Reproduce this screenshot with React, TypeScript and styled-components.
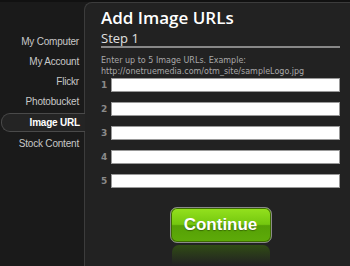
import styled, { createGlobalStyle } from 'styled-components'

const GlobalStyle = createGlobalStyle`
  html, body {
    margin: 0;
    padding: 0;
    background: #181818;
    width: 350px;
    height: 266px;
    overflow: hidden;
  }
  body {
    font-family: "DejaVu Sans", "Liberation Sans", sans-serif;
  }
`

const sources = ['My Computer', 'My Account', 'Flickr', 'Photobucket', 'Image URL', 'Stock Content']

export default function App() {
  return (
    <>
      <GlobalStyle />
      <Layout>
        <Sidebar>
          {sources.map(name => (
            <NavItem key={name} $active={name === 'Image URL'}>{name}</NavItem>
          ))}
        </Sidebar>
        <Panel>
          <Title>Add Image URLs</Title>
          <StepHeading>Step 1</StepHeading>
          <Hint>
            Enter up to 5 Image URLs. Example:<br />
            http://onetruemedia.com/otm_site/sampleLogo.jpg
          </Hint>
          <Fields>
            {[1, 2, 3, 4, 5].map(n => (
              <FieldRow key={n}>
                <FieldNumber>{n}</FieldNumber>
                <UrlInput type="text" />
              </FieldRow>
            ))}
          </Fields>
          <ButtonArea>
            <ContinueButton>Continue</ContinueButton>
            <Reflection />
          </ButtonArea>
        </Panel>
      </Layout>
    </>
  )
}

const Layout = styled.div`
  display: flex;
  width: 350px;
  height: 266px;
  background: linear-gradient(#111 0, #111 2px, #1a1a1a 2px);
`

const Sidebar = styled.nav`
  width: 84px;
  flex-shrink: 0;
  padding-top: 32px;
  display: flex;
  flex-direction: column;
  position: relative;
  z-index: 1;
`

const NavItem = styled.div<{ $active?: boolean }>`
  height: 20px;
  line-height: 20px;
  text-align: right;
  font-family: "Liberation Sans", Arial, sans-serif;
  font-size: 10px;
  letter-spacing: -0.2px;
  padding-right: 5px;
  color: ${p => (p.$active ? '#fff' : '#c8c8c8')};
  font-weight: ${p => (p.$active ? 'bold' : 'normal')};
  ${p =>
    p.$active &&
    `
    height: 17px;
    line-height: 17px;
    margin: 1px -1px 2px 1px;
    background: #242424;
    border: 1px solid #4a4a4a;
    border-right: none;
    border-radius: 9px 0 0 9px;
  `}
`

const Panel = styled.main`
  flex: 1;
  margin-top: 2px;
  background: #222;
  border-top: 1px solid #3c3c3c;
  border-left: 1px solid #3c3c3c;
  border-top-left-radius: 8px;
  padding: 4px 10px 0 16px;
  display: flex;
  flex-direction: column;
`

const Title = styled.h1`
  margin: 0;
  font-family: "Open Sans", sans-serif;
  font-weight: 600;
  font-size: 17px;
  line-height: 21px;
  color: #fff;
`

const StepHeading = styled.h2`
  margin: 3px 0 0;
  font-family: "Open Sans", sans-serif;
  font-weight: 400;
  font-size: 13px;
  line-height: 15px;
  color: #e0e0e0;
  border-bottom: 2px solid #888;
`

const Hint = styled.p`
  margin: 7px 0 0;
  font-size: 8px;
  line-height: 11px;
  color: #a8a8a8;
`

const Fields = styled.div`
  display: flex;
  flex-direction: column;
  gap: 10px;
  margin-top: 1px;
`

const FieldRow = styled.div`
  display: flex;
  align-items: center;
  gap: 5px;
`

const FieldNumber = styled.span`
  width: 5px;
  font-size: 9px;
  font-weight: bold;
  color: #8a8a8a;
`

const UrlInput = styled.input`
  flex: 1;
  height: 14px;
  box-sizing: border-box;
  margin: 0;
  padding: 0 3px;
  border: 1px solid #999;
  background: #fff;
  outline: none;
`

const ButtonArea = styled.div`
  display: flex;
  flex-direction: column;
  align-items: center;
  margin-top: 19px;
`

const ContinueButton = styled.button`
  width: 102px;
  height: 36px;
  border-radius: 7px;
  border: 1px solid #8a8a8a;
  box-shadow: inset 0 0 0 1px #3d6a00;
  background: linear-gradient(#95e21e 0%, #74c70f 48%, #55a006 52%, #5eab09 100%);
  color: #fff;
  font-family: "Liberation Sans", Arial, sans-serif;
  font-weight: bold;
  font-size: 17px;
  text-shadow: 0 1px 1px rgba(0, 0, 0, 0.35);
  padding: 0;
  cursor: pointer;
`

const Reflection = styled.div`
  width: 98px;
  height: 22px;
  margin-top: 2px;
  border-radius: 7px 7px 0 0;
  background: linear-gradient(rgba(60, 110, 10, 0.55), rgba(34, 34, 34, 0) 90%);
`
